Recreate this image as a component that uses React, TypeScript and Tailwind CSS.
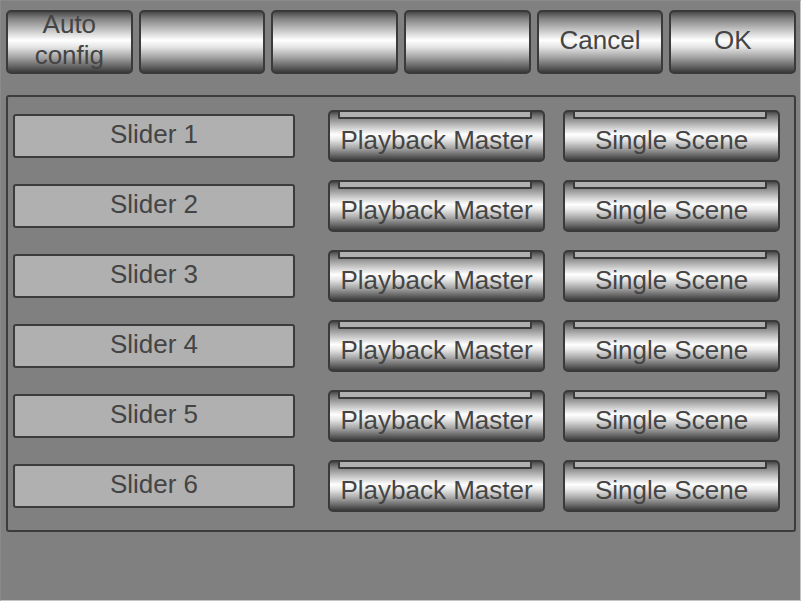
const metal =
  "bg-[linear-gradient(to_bottom,#4a4a4a_0%,#7e7e7e_10%,#c4c4c4_30%,#ffffff_47%,#e6e6e6_58%,#a2a2a2_76%,#5e5e5e_92%,#3c3c3c_100%)]";

const TopButton = ({ label }: { label?: string }) => (
  <button
    className={`flex-1 h-[64px] rounded-[5px] border-2 border-[#3a3a3a] ${metal} flex items-center justify-center text-[26px] leading-[31px] text-[#444444] pb-[3px] overflow-hidden`}
  >
    {label === "Auto config" ? (
      <span className="flex flex-col items-center -mt-[1px]">
        <span>Auto</span>
        <span>config</span>
      </span>
    ) : (
      <span>{label}</span>
    )}
  </button>
);

const ModeButton = ({ label }: { label: string }) => (
  <button
    className={`w-[217px] h-[52px] rounded-[5px] border-2 border-[#3a3a3a] ${metal} flex flex-col text-[26px] text-[#444444]`}
  >
    <span className="block h-[10px] ml-[8px] mr-[11px] self-stretch bg-[#b0b0b0] border-2 border-t-0 border-[#3a3a3a] rounded-b-[2px]" />
    <span className="flex-1 flex items-center justify-center whitespace-nowrap pt-[2px]">
      {label}
    </span>
  </button>
);

const App = () => {
  return (
    <div className="w-[801px] h-[601px] bg-[#808080] border border-t-[#8a8a8a] border-l-[#8a8a8a] border-r-[#c4c4c4] border-b-[#c4c4c4] font-['Liberation_Sans',Arial,sans-serif] overflow-hidden">
      <div className="flex gap-[6px] pt-[9px] pl-[5px] w-[795px]">
        {topButtons.map((label, i) => (
          <TopButton key={i} label={label} />
        ))}
      </div>

      <div className="mt-[21px] ml-[5px] w-[790px] h-[437px] border-2 border-[#3c3c3c] rounded-[3px] pt-[13px] pl-[5px] flex flex-col gap-[18px]">
        {sliders.map((name) => (
          <div key={name} className="flex items-center h-[52px]">
            <div className="w-[282px] h-[44px] bg-[#b0b0b0] border-2 border-[#3c3c3c] rounded-[3px] flex items-center justify-center text-[26px] text-[#444444] pb-[3px]">
              {name}
            </div>
            <div className="ml-[33px]">
              <ModeButton label="Playback Master" />
            </div>
            <div className="ml-[18px]">
              <ModeButton label="Single Scene" />
            </div>
          </div>
        ))}
      </div>
    </div>
  );
};

export default App;

const topButtons = ["Auto config", "", "", "", "Cancel", "OK"];

const sliders = [
  "Slider 1",
  "Slider 2",
  "Slider 3",
  "Slider 4",
  "Slider 5",
  "Slider 6",
];
